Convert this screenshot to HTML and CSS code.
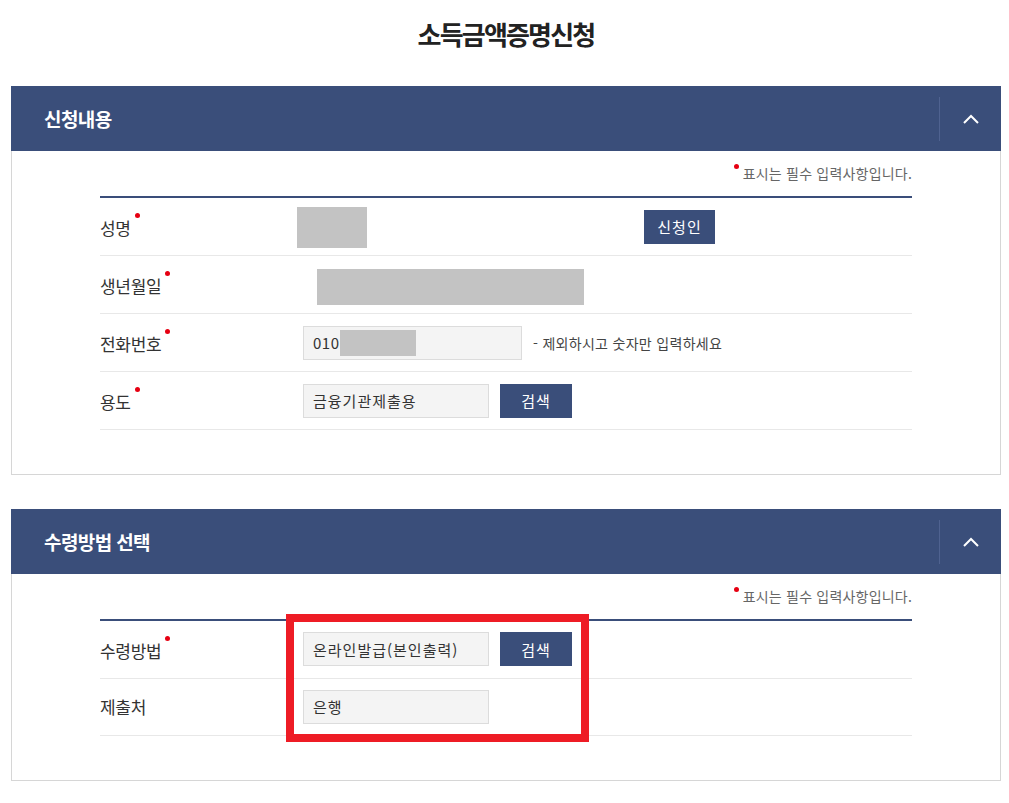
FILE: index.html
```html
<!DOCTYPE html>
<html lang="ko">
<head>
<meta charset="utf-8">
<link rel="stylesheet" href="styles.css">
</head>
<body>
<div class="page">
  <h1 class="page-title">소득금액증명신청</h1>

  <section class="panel">
    <div class="panel-head">
      <h2 class="panel-title">신청내용</h2>
      <div class="toggle">
        <svg width="18" height="10" viewBox="0 0 18 10"><polyline points="2,9 9,2 16,9" fill="none" stroke="#fff" stroke-width="2"/></svg>
      </div>
    </div>
    <div class="panel-body">
      <p class="note"><span class="dot"></span>표시는 필수 입력사항입니다.</p>
      <div class="table">
        <div class="row">
          <div class="label">성명<span class="dot"></span></div>
          <div class="value">
            <div class="mask mask-name"></div>
            <button class="btn btn-applicant">신청인</button>
          </div>
        </div>
        <div class="row">
          <div class="label">생년월일<span class="dot"></span></div>
          <div class="value">
            <div class="mask mask-birth"></div>
          </div>
        </div>
        <div class="row">
          <div class="label">전화번호<span class="dot"></span></div>
          <div class="value">
            <div class="input input-phone">010<span class="mask mask-phone"></span></div>
            <span class="hint">- 제외하시고 숫자만 입력하세요</span>
          </div>
        </div>
        <div class="row">
          <div class="label">용도<span class="dot"></span></div>
          <div class="value">
            <div class="input">금융기관제출용</div>
            <button class="btn">검색</button>
          </div>
        </div>
      </div>
    </div>
  </section>

  <section class="panel">
    <div class="panel-head">
      <h2 class="panel-title">수령방법 선택</h2>
      <div class="toggle">
        <svg width="18" height="10" viewBox="0 0 18 10"><polyline points="2,9 9,2 16,9" fill="none" stroke="#fff" stroke-width="2"/></svg>
      </div>
    </div>
    <div class="panel-body">
      <p class="note"><span class="dot"></span>표시는 필수 입력사항입니다.</p>
      <div class="table table-marked">
        <div class="row">
          <div class="label">수령방법<span class="dot"></span></div>
          <div class="value">
            <div class="input">온라인발급(본인출력)</div>
            <button class="btn">검색</button>
          </div>
        </div>
        <div class="row">
          <div class="label">제출처</div>
          <div class="value">
            <div class="input">은행</div>
          </div>
        </div>
        <div class="highlight"></div>
      </div>
    </div>
  </section>
</div>
</body>
</html>
```

FILE: styles.css
```css
* { box-sizing: border-box; }

body {
  margin: 0;
  background: #fff;
  font-family: "Noto Sans CJK KR", "Noto Sans", sans-serif;
  color: #333;
}

.page {
  padding: 0 8px 0 11px;
}

.page-title {
  margin: 0;
  padding-top: 18px;
  height: 86px;
  text-align: center;
  font-size: 26px;
  line-height: 32px;
  font-weight: 700;
  letter-spacing: -1.8px;
  color: #222;
}

.panel {
  margin-bottom: 34px;
}

.panel-head {
  height: 65px;
  background: #3a4e7a;
  display: flex;
  align-items: center;
  justify-content: space-between;
  padding-left: 33px;
}

.panel-title {
  margin: 0;
  color: #fff;
  font-size: 19px;
  font-weight: 700;
  letter-spacing: -0.6px;
  line-height: 24px;
}

.toggle {
  width: 62px;
  height: 44px;
  border-left: 1px solid #4f6290;
  display: flex;
  align-items: center;
  justify-content: center;
}

.panel-body {
  border: 1px solid #d6d6d6;
  border-top: none;
  padding: 0 88px 44px;
}

.note {
  margin: 0;
  height: 45px;
  padding-top: 12px;
  text-align: right;
  font-size: 14px;
  line-height: 20px;
  color: #666;
  letter-spacing: 0.2px;
}

.note .dot {
  margin-right: 4px;
  vertical-align: 10px;
}

.dot {
  display: inline-block;
  width: 5px;
  height: 5px;
  border-radius: 50%;
  background: #e60012;
}

.table {
  border-top: 2px solid #3a4e7a;
  position: relative;
}

.row {
  display: flex;
  align-items: center;
  height: 58px;
  border-bottom: 1px solid #e8e8e8;
}

.table-marked .row {
  height: 57.5px;
}

.label {
  width: 203px;
  flex-shrink: 0;
  font-size: 17px;
  color: #333;
  letter-spacing: -0.3px;
}

.label .dot {
  margin-left: 4px;
  vertical-align: 17px;
}

.value {
  display: flex;
  align-items: center;
}

.mask {
  display: inline-block;
  background: #c3c3c3;
}

.mask-name {
  width: 70px;
  height: 41px;
  margin-left: -6px;
  margin-right: 277px;
  margin-top: 2px;
}

.mask-birth {
  width: 267px;
  height: 36px;
  margin-left: 14px;
  margin-top: 4px;
}

.mask-phone {
  width: 76px;
  height: 26px;
  margin-left: 1px;
}

.input {
  width: 186px;
  height: 34px;
  background: #f4f4f4;
  border: 1px solid #dcdcdc;
  display: flex;
  align-items: center;
  padding-left: 9px;
  font-size: 15px;
  color: #333;
  letter-spacing: 1px;
}

.input-phone {
  width: 219px;
  letter-spacing: 0.5px;
}

.hint {
  margin-left: 11px;
  font-size: 14px;
  color: #444;
  letter-spacing: 0.3px;
}

.btn {
  margin-left: 11px;
  width: 72px;
  height: 34px;
  border: none;
  background: #3a4e7a;
  color: #fff;
  font-family: inherit;
  font-size: 15px;
  letter-spacing: 1px;
  padding: 0;
}

.btn-applicant {
  margin-left: 0;
  width: 71px;
}

.highlight {
  position: absolute;
  left: 186px;
  top: -7px;
  width: 303px;
  height: 128px;
  border: 8px solid #ee1c25;
}
```
